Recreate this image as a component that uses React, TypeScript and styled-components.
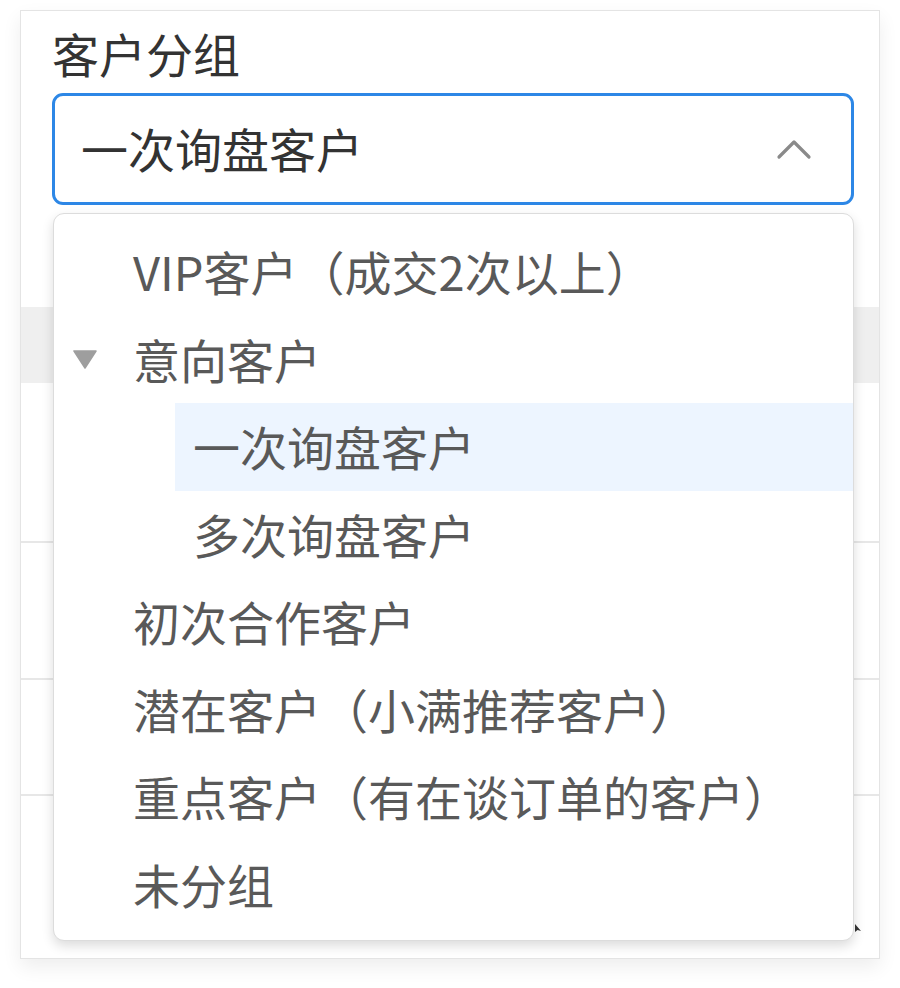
import React from "react";
import styled, { createGlobalStyle } from "styled-components";

const Global = createGlobalStyle`
  html, body { margin: 0; padding: 0; background: #ffffff; }
  body { font-family: "Noto Sans CJK SC", "Noto Sans", sans-serif; }
  * { box-sizing: border-box; }
`;

const Page = styled.div`
  padding: 10px 20px 0 20px;
  width: 900px;
  height: 988px;
`;

const Card = styled.div`
  position: relative;
  width: 860px;
  height: 949px;
  background: #ffffff;
  border: 1px solid #e4e4e4;
  box-shadow: 0 8px 18px rgba(0, 0, 0, 0.07);
  display: flex;
  flex-direction: column;
`;

const Field = styled.div`
  padding: 12px 25px 0 31px;
  display: flex;
  flex-direction: column;
  gap: 10px;
`;

const Label = styled.div`
  font-size: 47px;
  line-height: 60px;
  color: #333333;
`;

const SelectBox = styled.div`
  height: 112px;
  border: 3px solid #2d87e6;
  border-radius: 11px;
  display: flex;
  align-items: center;
  justify-content: space-between;
  padding: 0 39px 4px 26px;
  font-size: 47px;
  color: #333333;
`;

const Chevron = styled.svg`
  margin-top: 4px;
`;

const BgRow = styled.div<{ $h: number; $grey?: boolean; $line?: boolean }>`
  height: ${(p) => p.$h}px;
  flex: none;
  background: ${(p) => (p.$grey ? "#efefef" : "#ffffff")};
  border-bottom: ${(p) => (p.$line ? "2px solid #e7e7e7" : "none")};
`;

const Dropdown = styled.div`
  position: absolute;
  top: 202px;
  left: 32px;
  width: 801px;
  background: #ffffff;
  border: 1px solid #dcdcdc;
  border-radius: 11px;
  box-shadow: 0 5px 12px rgba(0, 0, 0, 0.14);
  padding: 14px 0 12px 0;
  display: flex;
  flex-direction: column;
`;

const Node = styled.div<{ $level: number }>`
  height: 87.5px;
  display: flex;
  align-items: stretch;
  padding-left: ${(p) => p.$level * 60}px;
`;

const Switcher = styled.div`
  width: 61px;
  flex: none;
  display: flex;
  align-items: center;
  justify-content: center;
`;

const Content = styled.div<{ $selected?: boolean }>`
  flex: 1;
  display: flex;
  align-items: center;
  padding-left: 18px;
  padding-bottom: 2px;
  font-size: 47px;
  color: #595959;
  white-space: nowrap;
  background: ${(p) => (p.$selected ? "#edf5ff" : "transparent")};
`;

const Pointer = styled.svg`
  position: absolute;
  left: 834px;
  top: 913px;
`;

type Item = { label: string; level: number; caret?: boolean; selected?: boolean };

const items: Item[] = [
  { label: "VIP客户（成交2次以上）", level: 0 },
  { label: "意向客户", level: 0, caret: true },
  { label: "一次询盘客户", level: 1, selected: true },
  { label: "多次询盘客户", level: 1 },
  { label: "初次合作客户", level: 0 },
  { label: "潜在客户（小满推荐客户）", level: 0 },
  { label: "重点客户（有在谈订单的客户）", level: 0 },
  { label: "未分组", level: 0 },
];

const Caret = () => (
  <svg width="26" height="20" viewBox="0 0 26 20">
    <path d="M2 2 L24 2 L13 19 Z" fill="#9e9e9e" stroke="#9e9e9e" strokeWidth="1.5" strokeLinejoin="round" />
  </svg>
);

const ChevronUp = () => (
  <Chevron width="36" height="22" viewBox="0 0 36 22">
    <polyline points="3,19 18,4 33,19" fill="none" stroke="#8a8a8a" strokeWidth="3.2" strokeLinecap="round" strokeLinejoin="round" />
  </Chevron>
);

export default function App() {
  return (
    <Page>
      <Global />
      <Card>
        <Field>
          <Label>客户分组</Label>
          <SelectBox>
            <span>一次询盘客户</span>
            <ChevronUp />
          </SelectBox>
        </Field>
        <BgRow $h={102} />
        <BgRow $h={76} $grey />
        <BgRow $h={160} $line />
        <BgRow $h={137} $line />
        <BgRow $h={116} $line />
        <BgRow $h={150} />
        <Dropdown>
          {items.map((it) => (
            <Node key={it.label} $level={it.level}>
              <Switcher>{it.caret ? <Caret /> : null}</Switcher>
              <Content $selected={it.selected}>{it.label}</Content>
            </Node>
          ))}
        </Dropdown>
        <Pointer width="8" height="10" viewBox="0 0 8 10">
          <path d="M0 0 L0 8 L2.5 6 L6 7 Z" fill="#333" />
        </Pointer>
      </Card>
    </Page>
  );
}
